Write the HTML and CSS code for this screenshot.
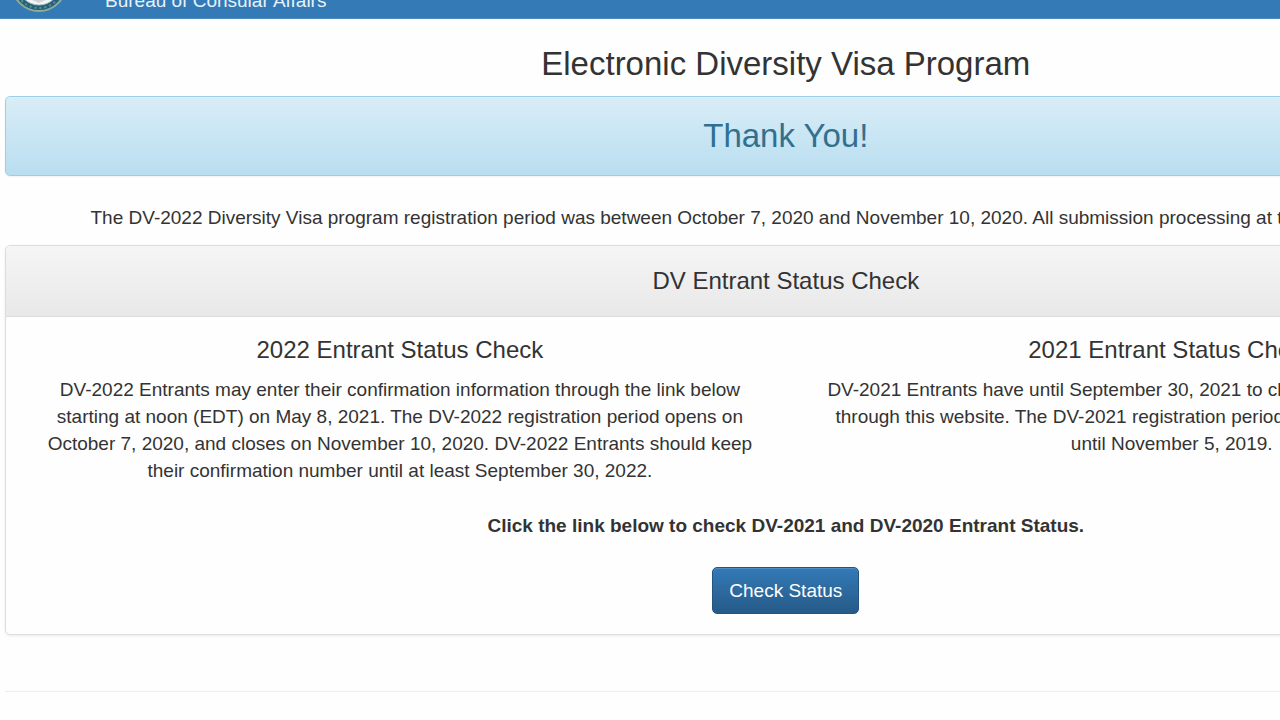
FILE: index.html
```html
<!DOCTYPE html>
<html lang="en">
<head>
    <meta charset="UTF-8" />
    <meta name="viewport" content="width=device-width, initial-scale=1.0" />
    <title>Electronic Diversity Visa Program</title>
    <link rel="stylesheet" href="styles.css">
</head>
<body>
    <header class="banner">
        <svg class="seal" viewBox="0 0 56 56" aria-hidden="true">
            <circle cx="28" cy="28" r="27" fill="#24607f" stroke="#8fac92" stroke-width="2" />
            <circle cx="28" cy="28" r="24" fill="none" stroke="#5f9184" stroke-width="2" stroke-dasharray="2 3" />
            <circle cx="28" cy="28" r="21" fill="#f4f6f5" stroke="#a9c3bd" stroke-width="1" />
            <path d="M28 12l5 10 11-4-6 15-5 4 2 7-7 3-7-3 2-7-5-4-6-15 11 4z" fill="#d3d3d6" />
            <path d="M24 28h8v10l-4 5-4-5z" fill="#b9b5b8" />
        </svg>
        <span class="bureau">Bureau of Consular Affairs</span>
    </header>

    <main class="container">
        <h1>Electronic Diversity Visa Program</h1>
        <div class="alert">
            <h2>Thank You!</h2>
        </div>
        <p class="notice">The DV-2022 Diversity Visa program registration period was between October 7, 2020 and November 10, 2020. All submission processing at this time has concluded.</p>

        <section class="panel">
            <div class="panel-heading">
                <h3>DV Entrant Status Check</h3>
            </div>
            <div class="panel-body">
                <div class="row">
                    <div class="col">
                        <h3>2022 Entrant Status Check</h3>
                        <p>DV-2022 Entrants may enter their confirmation information through the link below starting at noon (EDT) on May 8, 2021. The DV-2022 registration period opens on October 7, 2020, and closes on November 10, 2020. DV-2022 Entrants should keep their confirmation number until at least September 30, 2022.</p>
                    </div>
                    <div class="col">
                        <h3>2021 Entrant Status Check</h3>
                        <p>DV-2021 Entrants have until September 30, 2021 to check the status of their entry<br>through this website. The DV-2021 registration period was from October 2, 2019<br>until November 5, 2019.</p>
                    </div>
                </div>
                <p class="prompt"><strong>Click the link below to check DV-2021 and DV-2020 Entrant Status.</strong></p>
                <a class="btn" href="#">Check Status</a>
            </div>
        </section>
        <hr>
    </main>
</body>
</html>
```

FILE: styles.css
```css
* {
    box-sizing: border-box;
}
body {
    margin: 0;
    background: #fefefe;
    color: #333;
    font-family: "Liberation Sans", Arial, sans-serif;
    font-size: 19px;
    line-height: 27px;
    overflow: hidden;
}
h1, h2, h3, p {
    margin: 0;
    font-weight: normal;
}
.banner {
    display: flex;
    align-items: flex-end;
    gap: 38px;
    height: 19px;
    padding: 0 11px 6px;
    background: #337ab7;
    border-bottom: 1px solid #4d8bc0;
    color: #e8f1f8;
    overflow: hidden;
}
.seal {
    width: 56px;
    height: 56px;
    flex: none;
}
.bureau {
    line-height: 22px;
    white-space: nowrap;
}
/* content is wider than the window and runs off its right edge */
.container {
    width: 122%;
    padding-top: 26px;
    margin-left: 5px;
    text-align: center;
}
h1, h2 {
    font-size: 33px;
    line-height: 38px;
}
h3 {
    font-size: 24px;
    line-height: 28px;
}
.alert {
    margin-top: 13px;
    padding: 20px;
    border: 1px solid #9acfea;
    border-radius: 5px;
    background: linear-gradient(#d9edf7, #b9def0);
    box-shadow: inset 0 1px 0 rgba(255, 255, 255, 0.25), 0 1px 2px rgba(0, 0, 0, 0.05);
    color: #31708f;
}
.notice {
    margin: 28px 0 14px;
}
.panel {
    border: 1px solid #ddd;
    border-radius: 5px;
    box-shadow: 0 1px 3px rgba(0, 0, 0, 0.08);
}
.panel-heading {
    padding: 21px;
    border-bottom: 1px solid #ddd;
    border-radius: 4px 4px 0 0;
    background: linear-gradient(#f5f5f5, #e8e8e8);
}
.panel-body {
    padding: 19px 8px 20px;
}
.row {
    display: flex;
}
.col {
    flex: 1;
    padding: 0 27px;
}
.col p {
    margin-top: 12px;
}
.prompt {
    margin: 28px 0;
}
.btn {
    display: inline-block;
    padding: 9px 16px;
    border: 1px solid #245580;
    border-radius: 5px;
    background: linear-gradient(#337ab7, #265a88);
    box-shadow: inset 0 1px 0 rgba(255, 255, 255, 0.15);
    color: #fff;
    text-decoration: none;
}
hr {
    margin: 56px 0 27px;
    border: 0;
    border-top: 1px solid #eee;
}
```
